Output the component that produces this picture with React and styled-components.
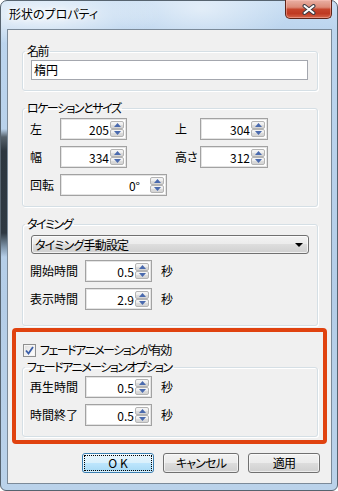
import React from 'react';
import styled, { createGlobalStyle } from 'styled-components';

const SpinArrow = ({ up }) => (
    <svg width="7" height="4" viewBox="0 0 7 4">
        <path d={up ? 'M0 4 L3.5 0 L7 4 Z' : 'M0 0 L3.5 4 L7 0 Z'} fill="#4a6aae" />
    </svg>
);

const SpinBox = ({ value, w, pr }) => (
    <Spin $w={w}>
        <SpinValue $pr={pr}>{value}</SpinValue>
        <SpinButtons>
            <SpinButton><SpinArrow up /></SpinButton>
            <SpinButton><SpinArrow /></SpinButton>
        </SpinButtons>
    </Spin>
);

const TimeRow = ({ label, value }) => (
    <Row>
        <Label $w={55}>{label}</Label>
        <SpinBox value={value} w={67} />
        <Unit>秒</Unit>
    </Row>
);

const App = () => {
    return (
        <>
            <GlobalStyle />
            <Window>
                <TitleBar>
                    <Title>形状のプロパティ</Title>
                    <CloseButton>
                        <svg width="14" height="11" viewBox="0 0 14 11">
                            <path d="M2.5 2 L11.5 9 M11.5 2 L2.5 9" stroke="#3d3d45" strokeWidth="4" strokeLinecap="round" />
                            <path d="M2.5 2 L11.5 9 M11.5 2 L2.5 9" stroke="#ffffff" strokeWidth="2" strokeLinecap="round" />
                        </svg>
                    </CloseButton>
                </TitleBar>

                <Client>
                    <Group $top={15} $pt={3} $pb={10}>
                        <Legend>名前</Legend>
                        <TextInput>楕円</TextInput>
                    </Group>

                    <Group $top={11} $pt={4} $pb={10}>
                        <Legend>ロケーションとサイズ</Legend>
                        <Rows>
                            <Row>
                                <Label $w={30}>左</Label>
                                <SpinBox value="205" w={67} />
                                <Label $w={25} $ml={48}>上</Label>
                                <SpinBox value="304" w={68} />
                            </Row>
                            <Row>
                                <Label $w={30}>幅</Label>
                                <SpinBox value="334" w={67} />
                                <Label $w={25} $ml={48}>高さ</Label>
                                <SpinBox value="312" w={68} />
                            </Row>
                            <Row>
                                <Label $w={30}>回転</Label>
                                <SpinBox value="0°" w={107} pr={10} />
                            </Row>
                        </Rows>
                    </Group>

                    <Group $top={11} $pt={5} $pb={15}>
                        <Legend>タイミング</Legend>
                        <Rows>
                            <Dropdown>
                                タイミング手動設定
                                <svg width="8" height="4" viewBox="0 0 8 4">
                                    <path d="M0 0 L8 0 L4 4 Z" fill="#000" />
                                </svg>
                            </Dropdown>
                            <TimeRow label="開始時間" value="0.5" />
                            <TimeRow label="表示時間" value="2.9" />
                        </Rows>
                    </Group>

                    <Highlight>
                        <CheckRow>
                            <CheckBox>
                                <svg width="9" height="9" viewBox="0 0 9 9">
                                    <path d="M1 4.5 L3.5 7.5 L8 1" stroke="#3b5ea8" strokeWidth="1.8" fill="none" />
                                </svg>
                            </CheckBox>
                            フェードアニメーションが有効
                        </CheckRow>
                        <Group $top={4} $pt={3} $pb={10} $inner>
                            <Legend>フェードアニメーションオプション</Legend>
                            <Rows>
                                <TimeRow label="再生時間" value="0.5" />
                                <TimeRow label="時間終了" value="0.5" />
                            </Rows>
                        </Group>
                    </Highlight>

                    <ButtonBar>
                        <Button $primary $w={72}><FocusText>OK</FocusText></Button>
                        <Button $w={76}>キャンセル</Button>
                        <Button $w={72}>適用</Button>
                    </ButtonBar>
                </Client>
            </Window>
        </>
    );
};

// ===============================
// 스타일
// ===============================
const GlobalStyle = createGlobalStyle`
    html, body {
        margin: 0;
        padding: 0;
        background: #ffffff;
    }
    body {
        font-family: "Noto Sans CJK JP", "Noto Sans", sans-serif;
        font-size: 12px;
        font-feature-settings: "palt";
        color: #000;
    }
`;

const Window = styled.div`
    width: 338px;
    height: 491px;
    box-sizing: border-box;
    border: 1px solid #56636f;
    border-radius: 7px 7px 6px 6px;
    padding: 0 5px 6px 6px;
    display: flex;
    flex-direction: column;
    background:
        linear-gradient(to bottom, transparent 128px, #56626c 136px, #2c363f 150px, #2f3942 232px, #7f95aa 246px, transparent 256px) left top / 6px 100% no-repeat,
        radial-gradient(ellipse 120px 30px at 40px 14px, rgba(255,255,255,0.75), rgba(255,255,255,0) 100%),
        radial-gradient(ellipse 90px 40px at 200px 8px, rgba(255,255,255,0.5), rgba(255,255,255,0) 100%),
        linear-gradient(to bottom, #c9def3 0, #bcd5ee 28px, #b4cde7 300px, #bad2ea 100%);
`;

const TitleBar = styled.div`
    height: 28px;
    flex-shrink: 0;
    display: flex;
    justify-content: space-between;
    align-items: flex-start;
`;

const Title = styled.span`
    margin: 5px 0 0 2px;
    font-size: 12px;
    line-height: 16px;
    color: #000;
    text-shadow: 0 0 4px #fff, 0 0 8px #fff;
`;

const CloseButton = styled.div`
    width: 47px;
    height: 19px;
    margin-top: -1px;
    box-sizing: border-box;
    border: 1px solid #5e2418;
    border-top: none;
    border-radius: 0 0 5px 5px;
    display: flex;
    align-items: center;
    justify-content: center;
    background: linear-gradient(to bottom, #e9b0a4 0, #dc8b78 40%, #c5452c 52%, #bf3a22 75%, #d5664a 100%);
    box-shadow: inset 0 0 0 1px rgba(255, 200, 190, 0.45);
`;

const Client = styled.div`
    flex: 1;
    display: flex;
    flex-direction: column;
    background: #f0f0f0;
    border: 1px solid #7b8a99;
    padding: 0 4px;
`;

const Group = styled.fieldset`
    margin: ${(p) => p.$top}px ${(p) => (p.$inner ? '0' : '9px')} 0 ${(p) => (p.$inner ? '0' : '10px')};
    padding: ${(p) => p.$pt}px 6px ${(p) => p.$pb}px 7px;
    border: 1px solid #d5dfe5;
    border-radius: 3px;
    box-shadow: inset 1px 1px 0 #fff, 1px 1px 0 #fff;
    min-width: 0;
`;

const Legend = styled.legend`
    padding: 0 2px;
    margin-left: -5px;
    font-size: 12px;
    line-height: 12px;
    letter-spacing: -1.5px;
`;

const Rows = styled.div`
    display: flex;
    flex-direction: column;
    gap: 6px;
`;

const Row = styled.div`
    display: flex;
    align-items: center;
    height: 22px;
`;

const Label = styled.span`
    width: ${(p) => p.$w}px;
    margin-left: ${(p) => p.$ml || 0}px;
    flex-shrink: 0;
    white-space: nowrap;
    line-height: 16px;
`;

const Unit = styled.span`
    margin-left: 9px;
    line-height: 16px;
`;

const TextInput = styled.div`
    margin: 0 3px 0 1px;
    height: 20px;
    box-sizing: border-box;
    border: 1px solid #a4a7ae;
    background: #fff;
    padding: 0 2px;
    font-size: 12px;
    line-height: 18px;
`;

const Spin = styled.div`
    width: ${(p) => p.$w}px;
    height: 22px;
    box-sizing: border-box;
    border: 1px solid #a2a2a2;
    box-shadow: inset 0 0 0 1px #e4e4e4;
    background: #fff;
    display: flex;
    align-items: stretch;
    padding: 2px;
`;

const SpinValue = styled.span`
    flex: 1;
    text-align: right;
    padding-right: ${(p) => p.$pr || 1}px;
    line-height: 18px;
`;

const SpinButtons = styled.div`
    width: 14px;
    display: flex;
    flex-direction: column;
`;

const SpinButton = styled.div`
    flex: 1;
    box-sizing: border-box;
    border: 1px solid #b4b4b4;
    border-radius: 2px;
    background: linear-gradient(to bottom, #f6f6f6 0, #ececec 50%, #dcdcdc 51%, #d4d4d4 100%);
    display: flex;
    align-items: center;
    justify-content: center;
`;

const Dropdown = styled.div`
    margin: 0 2px 0 1px;
    height: 19px;
    box-sizing: border-box;
    border: 1px solid #707070;
    border-radius: 3px;
    padding: 0 5px 0 3px;
    display: flex;
    align-items: center;
    justify-content: space-between;
    font-size: 12px;
    line-height: 17px;
    letter-spacing: -0.8px;
    background: linear-gradient(to bottom, #f2f2f2 0, #ebebeb 50%, #dddddd 50%, #cfcfcf 100%);
    box-shadow: inset 0 0 0 1px rgba(255, 255, 255, 0.7);
`;

const Highlight = styled.div`
    margin-top: 2px;
    border: 4px solid #e0420f;
    border-radius: 4px;
    padding: 11px 5px 3px 6px;
    display: flex;
    flex-direction: column;
`;

const CheckRow = styled.div`
    height: 14px;
    display: flex;
    align-items: center;
    gap: 4px;
    margin-left: 1px;
    line-height: 14px;
    letter-spacing: -1.5px;
`;

const CheckBox = styled.div`
    width: 13px;
    height: 13px;
    box-sizing: border-box;
    border: 1px solid #8e8f8f;
    background: linear-gradient(135deg, #dcdcdc 0, #f4f4f4 60%, #ffffff 100%);
    box-shadow: inset 0 0 0 1px #f4f4f4;
    display: flex;
    align-items: center;
    justify-content: center;
    letter-spacing: 0;
`;

const ButtonBar = styled.div`
    margin-top: 9px;
    padding-right: 7px;
    display: flex;
    justify-content: flex-end;
    gap: 9px;
`;

const Button = styled.div`
    width: ${(p) => p.$w}px;
    height: 20px;
    box-sizing: border-box;
    border: 1px solid ${(p) => (p.$primary ? '#3c7fb1' : '#707070')};
    border-radius: 3px;
    display: flex;
    align-items: center;
    justify-content: center;
    font-size: 12px;
    line-height: 16px;
    letter-spacing: -0.8px;
    padding: 1px;
    background: ${(p) =>
        p.$primary
            ? 'linear-gradient(to bottom, #eaf6fd 0, #d9f0fc 50%, #bee6fd 50%, #a7d9f5 100%)'
            : 'linear-gradient(to bottom, #f2f2f2 0, #ebebeb 50%, #dddddd 50%, #cfcfcf 100%)'};
    box-shadow: inset 0 0 0 1px rgba(255, 255, 255, 0.6);
`;

const FocusText = styled.span`
    flex: 1;
    align-self: stretch;
    border: 1px dotted #000;
    display: flex;
    align-items: center;
    justify-content: center;
    letter-spacing: 3px;
    padding-left: 3px;
`;

export default App;
